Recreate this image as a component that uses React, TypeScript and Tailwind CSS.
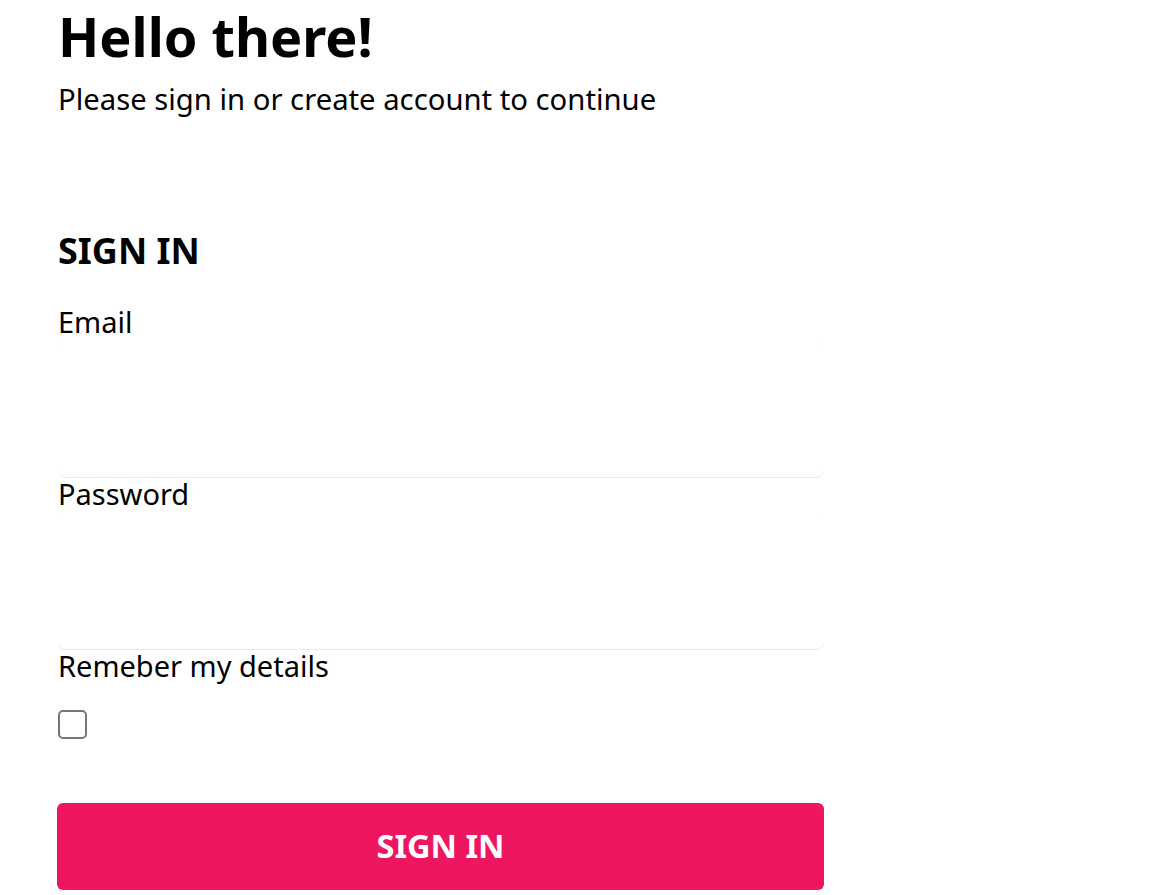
import React from "react";

function Field({ label, type }: { label: string; type: string }) {
  return (
    <div className="flex flex-col">
      <label className="text-[29px] leading-[34px] text-black">{label}</label>
      <input
        type={type}
        className="h-[138px] w-full rounded-[8px] bg-white shadow-[0_1px_0_#e9e9e9] outline-none px-4 text-[24px]"
      />
    </div>
  );
}

export default function App() {
  return (
    <div
      className="min-h-screen bg-white pl-[57px] text-black"
      style={{ fontFamily: '"Noto Sans", sans-serif' }}
    >
      <h1 className="text-[54px] leading-[72px] font-bold pl-px">Hello there!</h1>
      <p className="mt-[9px] text-[29.25px] leading-[36px] pl-px">
        Please sign in or create account to continue
      </p>
      <form className="mt-[112px] w-[767px] flex flex-col" onSubmit={(e) => e.preventDefault()}>
        <h2 className="text-[36px] leading-[44px] font-bold pl-px">SIGN IN</h2>
        <div className="mt-[32px] flex flex-col pl-px">
          <Field label="Email" type="email" />
          <Field label="Password" type="password" />
          <label className="text-[29px] leading-[34px]">Remeber my details</label>
          <div className="mt-[27px] flex">
            <input
              type="checkbox"
              className="appearance-none w-[29px] h-[29px] border-2 border-[#767676] rounded-[5px] bg-white"
            />
          </div>
        </div>
        <button
          type="submit"
          className="mt-[64px] h-[87px] w-full rounded-[6px] bg-[#ee1660] text-white text-[32.5px] font-bold flex items-center justify-center"
        >
          SIGN IN
        </button>
      </form>
    </div>
  );
}
